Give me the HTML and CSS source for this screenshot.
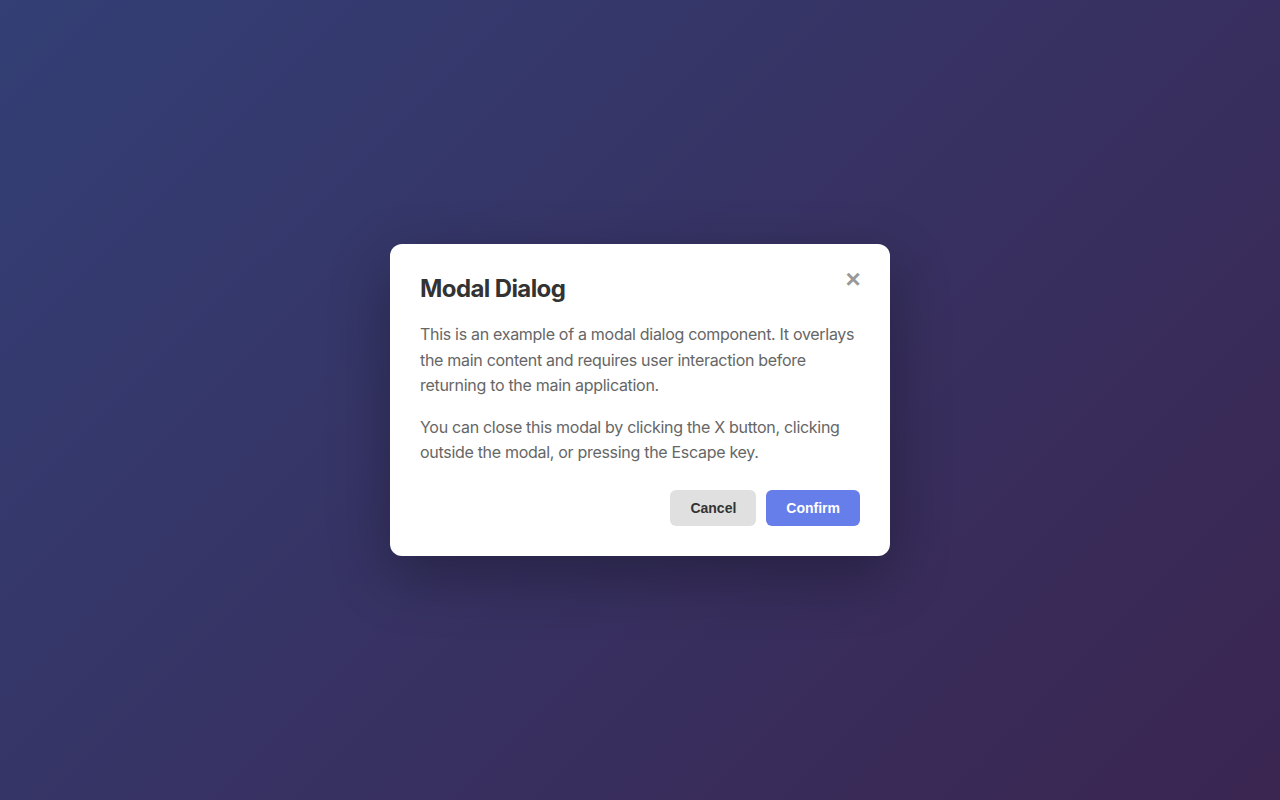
FILE: index.html
```html
<!DOCTYPE html>
<html lang="en">
<head>
<meta charset="utf-8">
<title>Modal Dialog</title>
<link rel="stylesheet" href="styles.css">
</head>
<body>
<div class="backdrop">
  <div class="overlay">
    <div class="modal" role="dialog" aria-labelledby="modal-title">
      <button class="close" aria-label="Close">&times;</button>
      <h2 class="modal-title" id="modal-title">Modal Dialog</h2>
      <p class="modal-text">This is an example of a modal dialog component. It overlays the main content and requires user interaction before returning to the main application.</p>
      <p class="modal-text">You can close this modal by clicking the X button, clicking outside the modal, or pressing the Escape key.</p>
      <div class="modal-footer">
        <button class="btn btn-cancel">Cancel</button>
        <button class="btn btn-confirm">Confirm</button>
      </div>
    </div>
  </div>
</div>
</body>
</html>
```
FILE: styles.css
```css
* { box-sizing: border-box; }
html, body { margin: 0; padding: 0; height: 100%; }
body {
  font-family: Inter, "Noto Sans", sans-serif;
}
.backdrop {
  width: 100%;
  height: 100%;
  background: linear-gradient(135deg, #667eea 0%, #764ba2 100%);
}
.overlay {
  width: 100%;
  height: 100%;
  background: rgba(0, 0, 0, 0.5);
  display: flex;
  align-items: center;
  justify-content: center;
}
.modal {
  position: relative;
  width: 500px;
  background: #fff;
  border-radius: 12px;
  padding: 30px;
  box-shadow: 0 20px 60px rgba(0, 0, 0, 0.3);
}
.close {
  position: absolute;
  top: 20px;
  right: 20px;
  width: 34px;
  height: 30px;
  padding: 0;
  border: none;
  background: none;
  color: #999;
  font-family: "Liberation Sans", Arial, sans-serif;
  font-size: 26px;
  font-weight: bold;
  line-height: 30px;
  text-align: center;
  cursor: pointer;
}
.modal-title {
  margin: 0 0 19px;
  font-size: 24px;
  font-weight: 700;
  color: #333;
  line-height: 29px;
  letter-spacing: -0.6px;
}
.modal-text {
  margin: 0 0 16px;
  font-size: 16px;
  line-height: 1.6;
  color: #666;
  letter-spacing: -0.3px;
}
.modal-text:last-of-type { margin-bottom: 0; }
.modal-footer {
  display: flex;
  justify-content: flex-end;
  gap: 10px;
  margin-top: 24px;
}
.btn {
  border: none;
  border-radius: 6px;
  padding: 0 20px;
  height: 36px;
  font-family: "Liberation Sans", Arial, sans-serif;
  font-size: 14px;
  font-weight: bold;
  cursor: pointer;
}
.btn-cancel {
  background: #e0e0e0;
  color: #333;
}
.btn-confirm {
  background: #667eea;
  color: #fff;
}
```
